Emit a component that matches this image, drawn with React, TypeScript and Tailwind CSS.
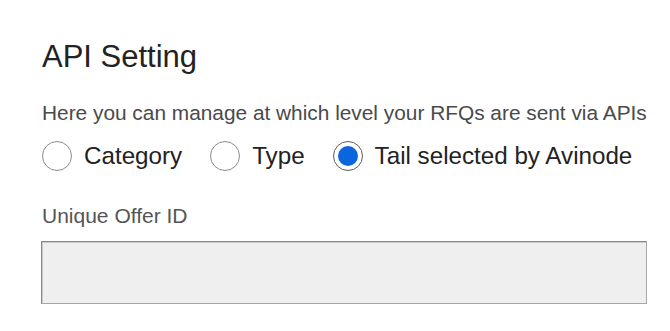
import React from "react";

function Radio({ checked, label }: { checked?: boolean; label: string }) {
  return (
    <label className="flex items-center gap-[12px]">
      <span
        className={
          "flex h-[30px] w-[30px] items-center justify-center rounded-full border bg-white " +
          (checked ? "border-[#5a5a5a]" : "border-[#8a8a8a]")
        }
      >
        {checked && <span className="h-[20px] w-[20px] rounded-full bg-[#0b66dd]" />}
      </span>
      <span className="text-[24.2px] leading-[30px] text-[#222]">{label}</span>
    </label>
  );
}

export default function App() {
  return (
    <div
      className="h-[331px] w-[670px] bg-white pl-[42px] pt-[39px]"
      style={{ fontFamily: '"Liberation Sans", Arial, sans-serif' }}
    >
      <h1 className="text-[31px] leading-[36px] text-[#222]">API Setting</h1>
      <p className="mt-[26px] text-[20.85px] leading-[24px] text-[#4a4a4a]">
        Here you can manage at which level your RFQs are sent via APIs
      </p>
      <div className="mt-[16px] flex items-center gap-[28px]">
        <Radio label="Category" />
        <Radio label="Type" />
        <Radio checked label="Tail selected by Avinode" />
      </div>
      <div className="mt-[33px] text-[21px] leading-[24px] text-[#555]">Unique Offer ID</div>
      <div className="ml-[-1px] mt-[13px] h-[63px] w-[606px] border border-[#a8a8a8] border-l-[#8a8a8a] border-t-[#8a8a8a] bg-[#efefef] shadow-[inset_1px_1px_0_#c9c9c9]" />
    </div>
  );
}
